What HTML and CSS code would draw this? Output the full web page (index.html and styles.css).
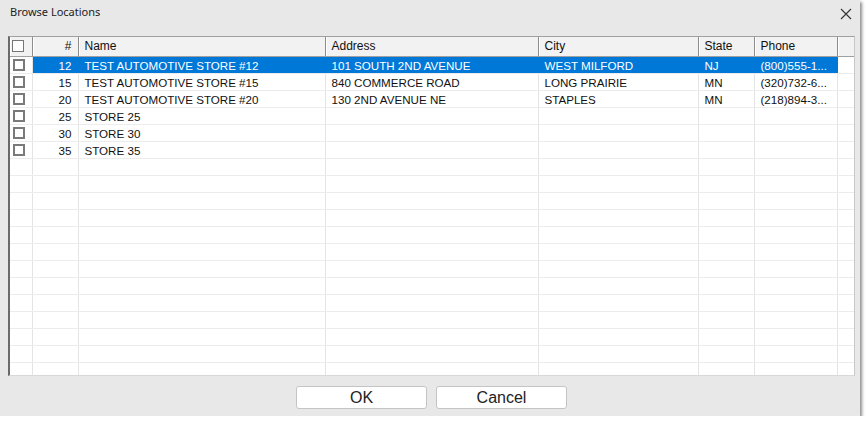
FILE: index.html
```html
<!DOCTYPE html>
<html>
<head>
  <link rel="stylesheet" href="styles.css">
</head>
<body>
  <div class="dialog">
    <div class="titlebar">
      <span class="title">Browse Locations</span>
      <svg class="close" width="12" height="12" viewBox="0 0 12 12">
        <path d="M1 1 L11 11 M11 1 L1 11" stroke="#333" stroke-width="1.1" fill="none"/>
      </svg>
    </div>
    <div class="grid">
      <table>
        <colgroup>
          <col style="width:22px">
          <col style="width:46px">
          <col style="width:247px">
          <col style="width:213px">
          <col style="width:160px">
          <col style="width:56px">
          <col style="width:83px">
          <col>
        </colgroup>
        <thead>
          <tr>
            <th class="chk"><span class="box"></span></th>
            <th class="num">#</th>
            <th>Name</th>
            <th>Address</th>
            <th>City</th>
            <th>State</th>
            <th>Phone</th>
            <th class="filler"></th>
          </tr>
        </thead>
        <tbody id="rows"></tbody>
      </table>
    </div>
    <div class="buttons">
      <button>OK</button>
      <button>Cancel</button>
    </div>
  </div>

  <script>
    const locations = [
      ['12', 'TEST AUTOMOTIVE STORE #12', '101 SOUTH 2ND AVENUE', 'WEST MILFORD', 'NJ', '(800)555-1...'],
      ['15', 'TEST AUTOMOTIVE STORE #15', '840 COMMERCE ROAD', 'LONG PRAIRIE', 'MN', '(320)732-6...'],
      ['20', 'TEST AUTOMOTIVE STORE #20', '130 2ND AVENUE NE', 'STAPLES', 'MN', '(218)894-3...'],
      ['25', 'STORE 25', '', '', '', ''],
      ['30', 'STORE 30', '', '', '', ''],
      ['35', 'STORE 35', '', '', '', '']
    ];
    const tbody = document.getElementById('rows');

    for (let i = 0; i < 19; i++) {
      const loc = locations[i];
      const tr = document.createElement('tr');
      if (i === 0) tr.className = 'selected';
      let html = '<td class="chk">' + (loc ? '<span class="box"></span>' : '') + '</td>';
      html += '<td class="num">' + (loc ? loc[0] : '') + '</td>';
      for (let c = 1; c < 6; c++) {
        html += '<td>' + (loc ? loc[c] : '') + '</td>';
      }
      html += '<td class="filler"></td>';
      tr.innerHTML = html;
      tbody.appendChild(tr);
    }
  </script>
</body>
</html>
```

FILE: styles.css
```css
body {
  margin: 0;
  background: white;
  font-family: "Liberation Sans", Arial, sans-serif;
}

.dialog {
  width: 860px;
  height: 416px;
  background: #e8e8e8;
  box-shadow: 2px 2px 3px rgba(0, 0, 0, 0.45);
  display: flex;
  flex-direction: column;
}

.titlebar {
  height: 36px;
  display: flex;
  justify-content: space-between;
  align-items: flex-start;
  padding: 4px 10px 0 10px;
  box-sizing: border-box;
}

.title {
  font-family: "Noto Sans", sans-serif;
  font-size: 11px;
  color: #222;
}

.close {
  margin-top: 4px;
  margin-right: -2px;
}

.grid {
  margin-left: 8px;
  width: 847px;
  height: 340px;
  box-sizing: border-box;
  background: white;
  border-top: 1px solid #a0a0a0;
  border-left: 2px solid #6a6a6a;
  border-right: 1px solid #c8c8c8;
  border-bottom: 1px solid #d8d8d8;
  overflow: hidden;
}

table {
  border-collapse: collapse;
  table-layout: fixed;
  width: 100%;
  font-size: 11.6px;
  color: #111;
}

th {
  height: 17px;
  padding: 0 6px 2px 6px;
  text-align: left;
  font-weight: normal;
  font-size: 12px;
  background: #f2f2f2;
  border-right: 1px solid #8c8c8c;
  border-bottom: 1px solid #a0a0a0;
  box-shadow: inset 1px 0 0 #ffffff;
  white-space: nowrap;
}

td {
  height: 15px;
  padding: 1px 6px 0 6px;
  border-right: 1px solid #e4e4e4;
  border-bottom: 1px solid #ececec;
  white-space: nowrap;
  overflow: hidden;
}

.chk {
  padding: 0 0 0 3px;
}

td.chk {
  height: 16px;
}

th.chk {
  padding: 0 0 2px 2px;
}

.num {
  text-align: right;
  padding-right: 6px;
}

th.filler,
td.filler {
  border-right: none;
}

.box {
  display: block;
  width: 8px;
  height: 8px;
  border: 2px solid #7a7a7a;
  background: white;
}

th .box {
  width: 10px;
  height: 10px;
  border: 1px solid #777;
}

tr.selected td {
  background: #0078d7;
  color: white;
  border-right-color: #0078d7;
}

tr.selected td.chk,
tr.selected td.filler {
  background: white;
  border-right-color: #e4e4e4;
}

tr.selected td.filler {
  border-right: none;
}

.buttons {
  flex: 1;
  display: flex;
  justify-content: center;
  align-items: flex-start;
  gap: 9px;
  padding-top: 10px;
  padding-left: 3px;
}

button {
  width: 131px;
  height: 23px;
  background: white;
  border: 1px solid #c4c4c4;
  border-radius: 3px;
  font-family: "Liberation Sans", Arial, sans-serif;
  font-size: 16px;
  color: #222;
  padding: 0;
}
```
